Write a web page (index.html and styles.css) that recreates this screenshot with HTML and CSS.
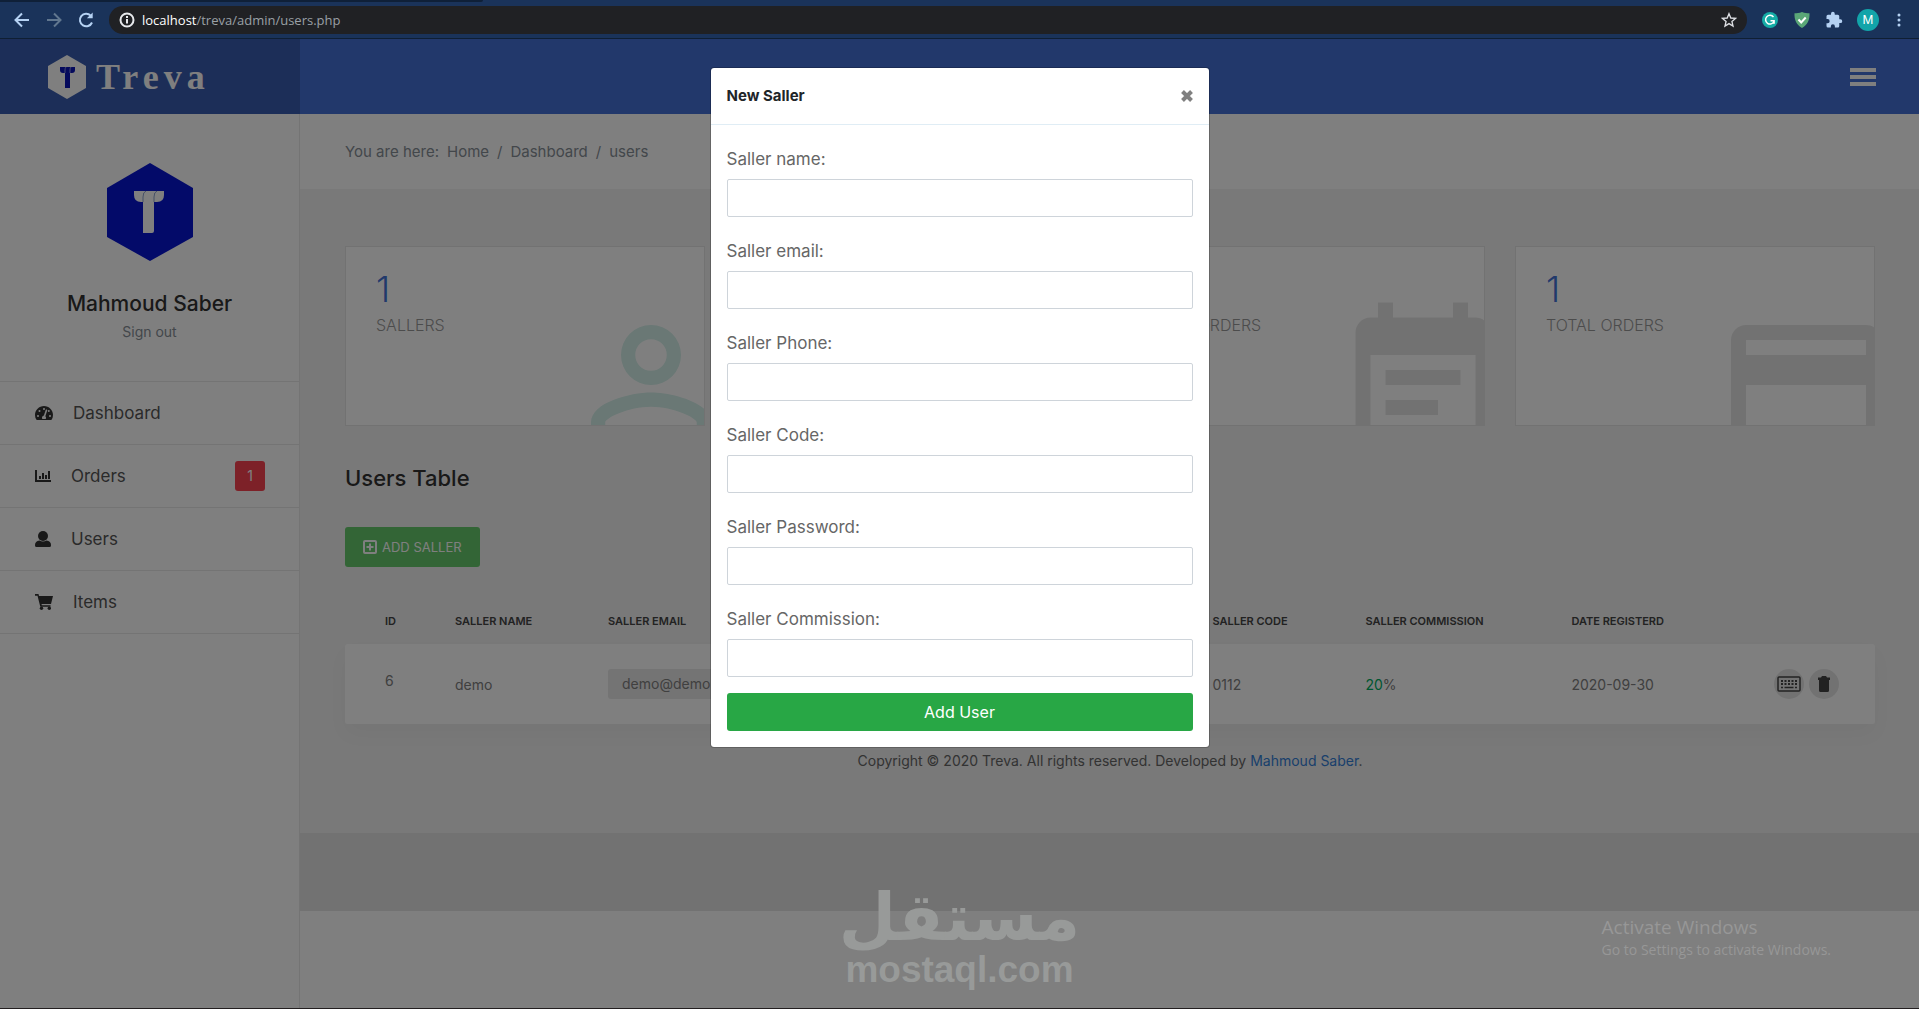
FILE: index.html
```html
<!DOCTYPE html>
<html lang="en">
<head>
  <meta charset="UTF-8">
  <meta name="viewport" content="width=device-width, initial-scale=1.0">
  <title>Treva | Users</title>
  <link rel="stylesheet" href="styles.css">
</head>
<body>
  <!-- browser bar -->
  <div class="browser">
    <div class="tab-strip"></div>
    <div class="toolbar">
      <button class="tool-btn" aria-label="Back">
        <svg width="18" height="18" viewBox="0 0 18 18" fill="none" stroke="#b5d2f3" stroke-width="2"><path d="M16 9H3M9 2.500L2.500 9L9 15.500"/></svg>
      </button>
      <button class="tool-btn" aria-label="Forward">
        <svg width="18" height="18" viewBox="0 0 18 18" fill="none" stroke="#61778f" stroke-width="2"><path d="M2 9h13M9 2.500L15.500 9L9 15.500"/></svg>
      </button>
      <button class="tool-btn" aria-label="Reload">
        <svg width="18" height="18" viewBox="0 0 18 18" fill="none" stroke="#b5d2f3" stroke-width="2"><path d="M15 11.500A6.300 6.300 0 1 1 13.700 4.600"/><path d="M15.700 1.500v5.800h-5.800z" fill="#b5d2f3" stroke="none"/></svg>
      </button>
      <div class="address">
        <svg width="16" height="16" viewBox="0 0 16 16" fill="none" stroke="#e8eaed" stroke-width="2"><circle cx="8" cy="8" r="6.500"/><path d="M8 7v4.500M8 4v2"/></svg>
        <span class="url"><b>localhost</b>/treva/admin/users.php</span>
        <svg width="16" height="16" viewBox="0 0 24 24" fill="none" stroke="#dfe1e5" stroke-width="2"><path d="M12 2.500l2.700 6.500 7 .6-5.300 4.600 1.600 6.900-6-3.700-6 3.700 1.600-6.900L2.300 9.600l7-.6z"/></svg>
      </div>
      <div class="extensions">
        <svg width="18" height="18" viewBox="0 0 18 18"><circle cx="9" cy="9" r="8" fill="#15aca6"/><path d="M12.500 6A4.400 4.400 0 1 0 13 10.500M9.500 9.800h3.600v3" fill="none" stroke="#fff" stroke-width="1.500"/></svg>
        <svg width="18" height="18" viewBox="0 0 18 18"><path d="M9 1c3 1.200 5 1.300 7.500 1.300C16.800 9 14.500 14 9 17 3.500 14 1.200 9 1.500 2.300 4 2.300 6 2.200 9 1z" fill="#5aa777"/><path d="M5.500 8.500l2.700 3 4.500-5" fill="none" stroke="#fff" stroke-width="2"/></svg>
        <svg width="18" height="18" viewBox="0 0 24 24"><path d="M20.500 11H19V7a2 2 0 0 0-2-2h-4V3.500a2.500 2.500 0 0 0-5 0V5H4a2 2 0 0 0-2 2v3.800h1.500a2.700 2.700 0 0 1 0 5.400H2V20a2 2 0 0 0 2 2h3.800v-1.500a2.700 2.700 0 0 1 5.400 0V22H17a2 2 0 0 0 2-2v-4h1.500a2.500 2.500 0 0 0 0-5z" fill="#b5d2f3"/></svg>
        <span class="account">M</span>
        <svg class="dots" width="4" height="14" viewBox="0 0 4 14" fill="#b5d2f3"><circle cx="2" cy="2" r="1.500"/><circle cx="2" cy="7" r="1.500"/><circle cx="2" cy="12" r="1.500"/></svg>
      </div>
    </div>
  </div>

  <div class="page">
    <aside class="sidebar">
      <a class="logo" href="#">
        <svg width="38" height="44" viewBox="0 0 38 44"><path d="M19 0l19 11v22L19 44 0 33V11z" fill="#fff"/><path d="M12 12h15v3q0 3-3 3h-2v15h-5V18h-2q-3 0-3-3z" fill="#0a14b8"/><path d="M17 18v-3q0-2 1-3M22 18v-3q0-2 1-3" fill="none" stroke="#8b92e0"/></svg>
        <span>Treva</span>
      </a>
      <div class="account-box">
        <svg width="86" height="98" viewBox="0 0 86 98"><path d="M43 0l43 25v49L43 98 0 74V25z" fill="#0714d2"/><path d="M27 28h30v4q0 7-7 7h-3v29q0 2-2 2h-9V39h-2q-7 0-7-7z" fill="#fff"/><path d="M36 39v-5q0-5 3-6M47 39v-5q0-5 3-6" fill="none" stroke="#8ba2d0"/></svg>
        <h4 class="name">Mahmoud Saber</h4>
        <a class="signout" href="#">Sign out</a>
      </div>
      <nav class="menu">
        <a href="#">
          <svg width="18" height="16" viewBox="0 0 576 512" fill="#333"><path fill-rule="evenodd" d="M288 32C129 32 0 161 0 320c0 53 14 102 39 145 6 9 16 15 27 15h444c11 0 21-6 27-15 25-43 39-92 39-145C576 161 447 32 288 32zm0 64a32 32 0 1 1 0 64 32 32 0 0 1 0-64zM96 384a32 32 0 1 1 0-64 32 32 0 0 1 0 64zm48-160a32 32 0 1 1 0-64 32 32 0 0 1 0 64zm247-45l-61 184c25 19 29 50 14 85H232c-24-55 5-104 52-111l61-184c9-22 54-12 46 26zm50 45a32 32 0 1 1 0-64 32 32 0 0 1 0 64zm39 160a32 32 0 1 1 0-64 32 32 0 0 1 0 64z"/></svg>
          Dashboard
        </a>
        <a href="#">
          <svg width="16" height="16" viewBox="0 0 16 16" fill="#333"><path d="M0 2h2v10h14v2H0zM4 8h2v3H4zM7 5h2v6H7zM10 7h2v4h-2zM13 3h2v8h-2z"/></svg>
          Orders
          <span class="badge">1</span>
        </a>
        <a href="#">
          <svg width="16" height="16" viewBox="0 0 16 16" fill="#333"><circle cx="8" cy="5" r="5"/><path d="M4.500 9.500q3.500 2 7 0Q16 10 16 14v.5q0 1.500-1.500 1.500h-13Q0 16 0 14.500V14q0-4 4.500-4.500z"/></svg>
          Users
        </a>
        <a href="#">
          <svg width="18" height="16" viewBox="0 0 18 16" fill="#333"><path d="M0 0h3.500l.5 2h14l-2 8H6.500l.3 1.300H15.500v1.500H5.300L2.500 1.800H0z"/><circle cx="6.500" cy="14.300" r="1.700"/><circle cx="14.300" cy="14.300" r="1.700"/></svg>
          Items
        </a>
      </nav>
    </aside>

    <div class="content">
      <header class="topbar">
        <button class="hamburger" aria-label="Menu"><span></span><span></span><span></span></button>
      </header>
      <div class="breadcrumb">
        <span>You are here:</span>
        <ul>
          <li><a href="#">Home</a></li>
          <li><a href="#">Dashboard</a></li>
          <li>users</li>
        </ul>
      </div>
      <main>
        <section class="stats">
          <div class="stat">
            <h2>1</h2>
            <span>sallers</span>
            <svg class="stat-icon icon-account" viewBox="0 0 24 24" fill="#d4f0ea"><path fill-rule="evenodd" d="M12 4a4 4 0 1 1 0 8 4 4 0 0 1 0-8zm0 1.900a2.100 2.100 0 1 0 0 4.200 2.100 2.100 0 0 0 0-4.200zM12 13c2.700 0 8 1.300 8 4v3H4v-3c0-2.700 5.300-4 8-4zm0 1.900c-3 0-6.100 1.500-6.100 2.100v1.100h12.200V17c0-.6-3.100-2.100-6.100-2.100z"/></svg>
          </div>
          <div class="stat">
            <h2>1</h2>
            <span>items</span>
          </div>
          <div class="stat">
            <h2>1</h2>
            <span>new orders</span>
            <svg class="stat-icon icon-calendar" viewBox="0 0 24 24" fill="#e5e5e5"><path fill-rule="evenodd" d="M19 3h-1V1h-2v2H8V1H6v2H5c-1.100 0-2 .9-2 2v14c0 1.100.9 2 2 2h14c1.100 0 2-.9 2-2V5c0-1.100-.9-2-2-2zM5 8h14v11H5z"/><path d="M7 10h10v2H7zM7 14h7v2H7z"/></svg>
          </div>
          <div class="stat">
            <h2>1</h2>
            <span>total orders</span>
            <svg class="stat-icon icon-card" viewBox="0 0 24 24" fill="#e5e5e5"><path fill-rule="evenodd" d="M20 4H4c-1.100 0-2 .9-2 2v12c0 1.100.9 2 2 2h16c1.100 0 2-.9 2-2V6c0-1.100-.9-2-2-2zM4 6h16v2H4zM4 12h16v6H4z"/></svg>
          </div>
        </section>

        <h3 class="title">Users Table</h3>
        <button class="add-btn">
          <svg width="14" height="14" viewBox="0 0 14 14" fill="none" stroke="#fff" stroke-width="2"><rect x="1" y="1" width="12" height="12" rx="1"/><path d="M7 3.500v7M3.500 7h7"/></svg>
          add saller
        </button>

        <table class="users">
          <thead>
            <tr>
              <th class="col-id">id</th>
              <th class="col-name">saller name</th>
              <th class="col-email">saller email</th>
              <th>saller phone</th>
              <th class="col-code">saller code</th>
              <th class="col-commission">saller commission</th>
              <th class="col-date">date registerd</th>
              <th class="col-actions"></th>
            </tr>
          </thead>
          <tbody>
            <tr>
              <td class="id">6</td>
              <td>demo</td>
              <td><span class="email">demo@demo.com</span></td>
              <td>0100</td>
              <td>0112</td>
              <td><span class="percent">20</span>%</td>
              <td>2020-09-30</td>
              <td>
                <div class="actions">
                  <button aria-label="Edit"><svg width="24" height="16" viewBox="0 0 24 16" fill="none" stroke="#444" stroke-width="1.500"><rect x="1" y="1" width="22" height="14" rx="1"/><path d="M4 5h16M4 8h16" stroke-width="2" stroke-dasharray="2 1.500"/><path d="M4 11.500h2M7.500 11.500h9M18 11.500h2"/></svg></button>
                  <button aria-label="Delete"><svg width="12" height="16" viewBox="0 0 12 16" fill="#444"><path d="M4 0h4l1 1.500h3V4H0V1.500h3zM1 4h10v10.500q0 1.500-1.500 1.500h-7Q1 16 1 14.500z"/></svg></button>
                </div>
              </td>
            </tr>
          </tbody>
        </table>
        <p class="copyright">Copyright © 2020 Treva. All rights reserved. Developed by <a href="#">Mahmoud Saber</a>.</p>
      </main>
      <div class="bottom-band"></div>
    </div>

    <div class="backdrop">
      <div class="modal" role="dialog" aria-labelledby="modal-title">
        <div class="modal-header">
          <h5 id="modal-title">New Saller</h5>
          <button class="close" aria-label="Close"><svg width="12" height="12" viewBox="0 0 12 12" stroke="#808080" stroke-width="4"><path d="M1.500 1.500l9 9M10.500 1.500l-9 9"/></svg></button>
        </div>
        <form class="modal-body">
          <div class="form-group">
            <label for="name">Saller name:</label>
            <input type="text" id="name">
          </div>
          <div class="form-group">
            <label for="email">Saller email:</label>
            <input type="email" id="email">
          </div>
          <div class="form-group">
            <label for="phone">Saller Phone:</label>
            <input type="text" id="phone">
          </div>
          <div class="form-group">
            <label for="code">Saller Code:</label>
            <input type="text" id="code">
          </div>
          <div class="form-group">
            <label for="password">Saller Password:</label>
            <input type="password" id="password">
          </div>
          <div class="form-group">
            <label for="commission">Saller Commission:</label>
            <input type="text" id="commission">
          </div>
          <button type="submit" class="submit">Add User</button>
        </form>
      </div>
    </div>

    <div class="mostaql">
      <span class="ar" lang="ar">مستقل</span>
      <span class="en">mostaql.com</span>
    </div>
    <div class="activate">
      <p class="activate-title">Activate Windows</p>
      <p>Go to Settings to activate Windows.</p>
    </div>
  </div>
</body>
</html>
```

FILE: styles.css
```css
* {
  box-sizing: border-box;
}
body {
  margin: 0;
  min-height: 100vh;
  display: flex;
  flex-direction: column;
  font-family: Inter, "Open Sans", sans-serif;
  font-size: 14px;
  color: #666;
  background: #fff;
}
h2, h3, h4, h5, p, ul {
  margin: 0;
  padding: 0;
}
a {
  color: inherit;
  text-decoration: none;
}
button {
  font-family: inherit;
  border: none;
  background: none;
  padding: 0;
  cursor: pointer;
}
svg {
  display: block;
  flex-shrink: 0;
}

/* browser bar */
.browser {
  background: #1a335a;
  border-bottom: 1px solid #0f1f33;
}
.tab-strip {
  width: 483px;
  height: 2px;
  background: #0f2038;
  border-bottom-right-radius: 2px;
}
.toolbar {
  display: flex;
  align-items: center;
  height: 36px;
  padding: 0 16px 0 13px;
}
.tool-btn {
  margin-right: 14px;
}
.address {
  flex: 1;
  display: flex;
  align-items: center;
  gap: 7px;
  height: 28px;
  margin-right: 14px;
  padding: 0 10px;
  border-radius: 14px;
  background: #202124;
  color: #9aa0a6;
}
.url {
  flex: 1;
  font-family: "Open Sans", sans-serif;
  font-size: 13px;
}
.url b {
  font-weight: 400;
  color: #fff;
}
.extensions {
  display: flex;
  align-items: center;
  gap: 14px;
}
.account {
  width: 22px;
  height: 22px;
  border-radius: 50%;
  background: #12a4a9;
  color: #fff;
  font-size: 12px;
  line-height: 22px;
  text-align: center;
}
.dots {
  margin: 0 2px 0 4px;
}

/* layout */
.page {
  position: relative;
  flex: 1;
  display: flex;
  border-bottom: 1px solid #231f20;
}
.sidebar {
  width: 300px;
  flex-shrink: 0;
  background: #fff;
  border-right: 1px solid #e9e9e9;
}
.content {
  flex: 1;
  min-width: 0;
}
.logo {
  display: flex;
  align-items: center;
  gap: 10px;
  height: 75px;
  margin-right: -1px;
  padding-left: 48px;
  background: #385cb0;
  color: #fff;
}
.logo span {
  font-family: "Liberation Serif", serif;
  font-size: 36px;
  font-weight: 700;
  letter-spacing: 5px;
}
.account-box {
  display: flex;
  flex-direction: column;
  align-items: center;
  height: 267px;
  padding-top: 49px;
}
.name {
  margin-top: 28px;
  font-size: 21px;
  font-weight: 500;
  line-height: 30px;
  color: #333;
}
.signout {
  line-height: 26px;
  color: #868e96;
}
.menu a {
  display: flex;
  align-items: center;
  gap: 20px;
  height: 63px;
  padding: 0 34px 0 35px;
  border-top: 1px solid #e9e9e9;
  font-size: 17px;
  color: #555;
}
.menu a:last-child {
  height: 64px;
  border-bottom: 1px solid #e9e9e9;
}
.badge {
  width: 30px;
  margin-left: auto;
  border-radius: 3px;
  background: #fa4251;
  color: #fff;
  font-size: 14px;
  line-height: 30px;
  text-align: center;
}
.topbar {
  display: flex;
  justify-content: flex-end;
  align-items: center;
  height: 75px;
  padding-right: 43px;
  background: #4470d6;
}
.hamburger {
  display: flex;
  flex-direction: column;
  gap: 3px;
  width: 26px;
}
.hamburger span {
  height: 4px;
  background: #fff;
}
.breadcrumb {
  display: flex;
  align-items: center;
  gap: 8px;
  height: 75px;
  padding-left: 45px;
  font-size: 15px;
  color: #868e96;
}
.breadcrumb ul {
  display: flex;
  list-style: none;
}
.breadcrumb li + li::before {
  content: "/";
  padding: 0 8px;
}
main {
  height: 644px;
  padding: 57px 44px 0 45px;
  background: #f2f2f2;
}

/* stat cards */
.stats {
  display: grid;
  grid-template-columns: repeat(4, 1fr);
  gap: 30px;
}
.stat {
  position: relative;
  height: 180px;
  padding: 20px 30px;
  overflow: hidden;
  background: #fff;
  border: 1px solid #e5e5e5;
}
.stat h2 {
  font-size: 36px;
  font-weight: 300;
  line-height: 44px;
  color: #4272d7;
}
.stat span {
  font-size: 16px;
  font-weight: 300;
  line-height: 28px;
  text-transform: uppercase;
  color: #999;
}
.stat-icon {
  position: absolute;
  bottom: -50px;
  width: 180px;
  height: 180px;
}
.icon-account {
  right: -37px;
}
.icon-calendar {
  right: -29px;
}
.icon-card {
  right: -22px;
}

/* table */
.title {
  margin-top: 36px;
  font-size: 22px;
  font-weight: 500;
  line-height: 32px;
  color: #333;
}
.add-btn {
  display: flex;
  align-items: center;
  gap: 5px;
  height: 40px;
  margin-top: 33px;
  padding: 0 18px;
  border-radius: 3px;
  background: #66ca6c;
  color: #fff;
  font-size: 13px;
  text-transform: uppercase;
}
.users {
  width: 100%;
  margin-top: 30px;
  table-layout: fixed;
  border-spacing: 0;
}
.users th {
  height: 47px;
  padding: 0 0 0 40px;
  font-size: 11px;
  font-weight: 600;
  text-align: left;
  text-transform: uppercase;
  white-space: nowrap;
  color: #444;
}
.users tbody tr {
  box-shadow: 0 10px 20px rgba(0, 0, 0, 0.03);
}
.users td {
  height: 80px;
  padding: 0 0 0 40px;
  background: #fff;
  color: #808080;
}
.users td:first-child {
  border-radius: 3px 0 0 3px;
}
.users td:last-child {
  padding-right: 36px;
  border-radius: 0 3px 3px 0;
}
.users .id {
  padding-bottom: 8px;
}
.col-id {
  width: 70px;
}
.col-name,
.col-code {
  width: 10%;
}
.col-email {
  width: 20%;
}
.col-commission {
  width: 206px;
}
.col-date {
  width: 12%;
}
.col-actions {
  width: 160px;
}
.email {
  display: inline-block;
  padding: 0 14px;
  border-radius: 3px;
  background: #e8e8e8;
  line-height: 30px;
}
.percent {
  color: #00ad5f;
}
.actions {
  display: flex;
  justify-content: flex-end;
  gap: 5px;
}
.actions button {
  display: flex;
  justify-content: center;
  align-items: center;
  width: 30px;
  height: 30px;
  border-radius: 50%;
  background: #e5e5e5;
}
.copyright {
  margin-top: 25px;
  line-height: 24px;
  text-align: center;
}
.copyright a {
  color: #3480d8;
}
.bottom-band {
  height: 78px;
  background: #e5e5e5;
}

/* modal */
.backdrop {
  position: absolute;
  inset: 0;
  display: flex;
  justify-content: center;
  align-items: flex-start;
  padding-top: 28px;
  background: rgba(0, 0, 0, 0.5);
}
.modal {
  width: 500px;
  background: #fff;
  background-clip: padding-box;
  border: 1px solid rgba(0, 0, 0, 0.2);
  border-radius: 4px;
}
.modal-header {
  display: flex;
  justify-content: space-between;
  padding: 16px;
  border-bottom: 1px solid #e0edf5;
}
.modal-header h5 {
  font-size: 15px;
  font-weight: 700;
  line-height: 24px;
  color: #212529;
}
.close {
  display: flex;
  align-items: center;
  height: 24px;
}
.modal-body {
  padding: 16px;
}
.form-group {
  margin-bottom: 16px;
}
.form-group label {
  display: block;
  padding: 6px 0 8px;
  font-size: 17px;
  line-height: 24px;
}
.form-group input {
  display: block;
  width: 100%;
  height: 38px;
  padding: 6px 12px;
  border: 1px solid #ced4da;
  border-radius: 2px;
  font: inherit;
}
.submit {
  display: block;
  width: 100%;
  height: 38px;
  border-radius: 3px;
  background: #28a745;
  color: #fff;
  font-size: 16px;
}

/* watermarks */
.mostaql {
  position: absolute;
  left: 0;
  right: 0;
  bottom: 16px;
  display: flex;
  flex-direction: column;
  align-items: center;
  color: #989a99;
  font-weight: 700;
}
.ar {
  font-family: "DejaVu Sans", sans-serif;
  font-size: 66px;
  line-height: 60px;
}
.en {
  font-family: "Liberation Sans", Arial, sans-serif;
  font-size: 37px;
  line-height: 44px;
}
.activate {
  position: absolute;
  right: 88px;
  bottom: 48px;
  font-family: "Open Sans", sans-serif;
  font-size: 14px;
  line-height: 20px;
  color: #979797;
}
.activate-title {
  font-size: 19px;
  line-height: 26px;
}
```
